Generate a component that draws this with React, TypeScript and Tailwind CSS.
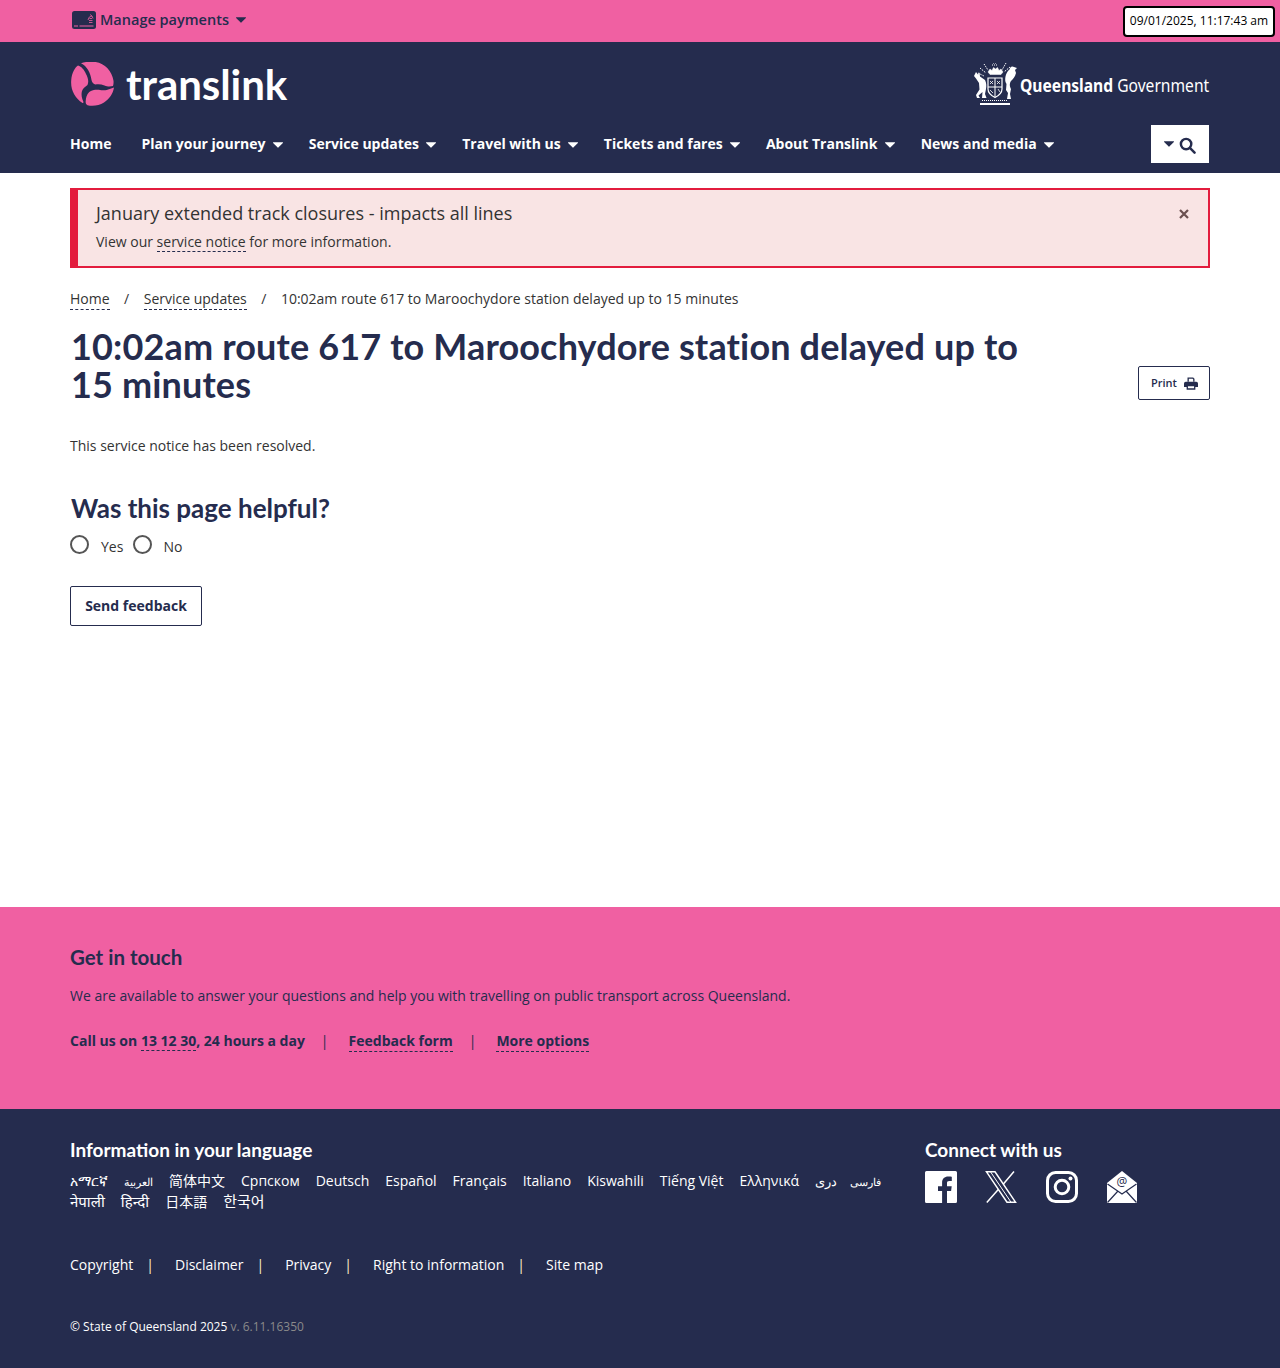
import React from "react";

const OS = "font-['Open_Sans',sans-serif]";
const H = "font-['Lato',sans-serif]";

function Caret({ className = "" }: { className?: string }) {
  return (
    <svg viewBox="0 0 10 6" className={`w-[10px] h-[6px] ${className}`} fill="currentColor">
      <path d="M0.4 0.3h9.2a.4.4 0 0 1 .3.7L5.3 5.6a.4.4 0 0 1-.6 0L.1 1a.4.4 0 0 1 .3-.7z" />
    </svg>
  );
}

function NavItem({ label, caret = true, className = "" }: { label: string; caret?: boolean; className?: string }) {
  return (
    <a className={`flex items-center gap-[7px] text-[14px] font-bold text-white leading-[20px] whitespace-nowrap ${className}`}>
      {label}
      {caret && <Caret className="text-white mt-[2px]" />}
    </a>
  );
}

function Crest() {
  return (
    <svg viewBox="0 0 44 42" className="w-[44px] h-[42px] shrink-0" fill="none" stroke="#fff">
      <path d="M15 9l2-3 2 1.500 1.500-3 2 1.500 2-1.500 1.500 3 2-1.500 2 3-2 2.500H17z" fill="#fff" strokeWidth="0.5" />
      <path d="M11 1l4 6M7 5l6 5M5 10l6 3M33 0l-4 7M37 4l-6 5" strokeWidth="1" strokeDasharray="1.500 1" />
      <path d="M19 2h6M20 0h4" strokeWidth="1" strokeDasharray="1 1" />
      <path d="M15 15h14v11c0 5-4 7-7 8.500-3-1.500-7-3.500-7-8.500z" strokeWidth="1.200" />
      <path d="M22 15v19M15 24h14" strokeWidth="1" />
      <path d="M17 18l3 3M20 18l-3 3M24 18l3 3M27 18l-3 3M17 27l3 3M25 26l2 3" strokeWidth="0.800" />
      <path d="M3 9l2 2.500 1.500-2 .5 4 5 3.500c1.500 3 1.500 6 1 9l-1 5 1.500 4H9l.5-6-4 3.500 1.500 2.500H4l-1-3 3.500-5.500L6 20l-3-4.500L1 13z" fill="#fff" stroke="none" />
      <path d="M44 5l-2 2 1 3c-1 4-3 6-5 8-2 3-1 6 0 8l-1 5 1 5h-4l1-6-2-3 .5-6-1-2c-1-5 1-10 4-12.500.5-1.500 1-3 3-3z" fill="#fff" stroke="none" />
      <path d="M7 40h30v2H7z" fill="#fff" stroke="none" />
      <path d="M9 37.500h26" strokeWidth="1" strokeDasharray="1 1" />
    </svg>
  );
}

function TLogo() {
  return (
    <svg viewBox="0 0 44 44" className="w-[44px] h-[44px]" fill="#f060a2">
      <path d="M10 1.300C14-.3 19-.5 23-.2c10 .8 18 8.500 19.500 19 .2 2 0 4-.5 5.200-2 .4-5 1-8.500-.5-3-1.200-6-1.500-9-1-2-.2-3.500-2-4-4.500C19.500 11 16 4 10 1.300z" />
      <path d="M7 3.500C4.500 5 .8 10 .2 18.500-.5 28 4 36 11.500 41c.8.300 1.200-.5.800-1.500-1.500-3-2.300-7-1.300-10.500 1-3 3.500-4.500 5.500-6 1.500-3.500.5-7.500-1.500-11C13.500 8 10.500 4.500 7 3.500z" />
      <path d="M43 25.500c-1 6-4.500 11.500-10 15-5 3-11 4-16.500 2.700-1.500-.5-2-2-1.800-4.200.2-3.500 1-6.500 3.500-9 2.500-2 6-2.500 9.500-2.300 3 .5 5.500 1 8 .2 2.500-.6 5-1.400 7.300-2.400z" />
    </svg>
  );
}

function Sep() {
  return <span className="pl-[13px] pr-[21px] text-[#fff3c4]">|</span>;
}

function DashedLink({ children, className = "" }: { children: React.ReactNode; className?: string }) {
  return <a className={`border-b border-dashed border-[#252c4e] ${className}`}>{children}</a>;
}

const langs: { t: string; c?: string }[] = [
  { t: "አማርኛ" },
  { t: "العربية", c: "text-[11px]" },
  { t: "简体中文" },
  { t: "Српском" },
  { t: "Deutsch" },
  { t: "Español" },
  { t: "Français" },
  { t: "Italiano" },
  { t: "Kiswahili" },
  { t: "Tiếng Việt" },
  { t: "Ελληνικά" },
  { t: "دری", c: "text-[13px]" },
  { t: "فارسی", c: "text-[11px] -ml-[3px]" },
  { t: "नेपाली", c: "text-[15px]" },
  { t: "हिन्दी", c: "text-[15px]" },
  { t: "日本語" },
  { t: "한국어", c: "text-[15px]" },
];

export default function App() {
  return (
    <div className={`${OS} w-[1280px] h-[1368px] flex flex-col bg-white text-[#333]`}>
      <div className="h-[42px] bg-[#f060a2] flex items-center justify-between pl-[72px] pr-[5px]">
        <div className="flex items-center gap-[4px] text-[#252c4e] -mt-[3px]">
          <svg viewBox="0 0 24 18" className="w-[24px] h-[18px]">
            <rect width="24" height="18" rx="2.500" fill="#252c4e" />
            <path d="M2 15h4M7.500 15h14" stroke="#f060a2" strokeWidth="1" />
            <path d="M17 11.500h3.500M17 9.500h3.500M17.500 7.500h2.500M16 9a4.500 4.500 0 0 1 4-4M18 3.500a5 5 0 0 1 3 4" stroke="#f060a2" strokeWidth="0.800" fill="none" />
          </svg>
          <span className="text-[14.500px] font-semibold leading-[20px]">Manage payments</span>
          <Caret className="ml-[3px] text-[#252c4e]" />
        </div>
        <div className="h-[31px] w-[152px] bg-white border-2 border-black rounded-[4px] flex items-center justify-center text-[12px] text-black whitespace-nowrap">
          09/01/2025, 11:17:43 am
        </div>
      </div>

      <header className="h-[131px] bg-[#252c4e] px-[70px] flex flex-col shrink-0">
        <div className="h-[83px] flex items-center justify-between">
          <div className="flex items-center gap-[11px] pl-[1px]">
            <TLogo />
            <span className="font-['Lato',sans-serif] font-bold text-[42px] leading-none text-white tracking-[-0.05px]">translink</span>
          </div>
          <div className="flex items-center mr-[1px]">
            <Crest />
            <span className="text-[18px] text-white font-bold whitespace-nowrap font-['Noto_Sans',sans-serif] leading-none mt-[2px] scale-x-[0.867] origin-right -ml-[26px]">
              Queensland <span className="font-normal">Government</span>
            </span>
          </div>
        </div>
        <div className="flex items-center justify-between">
          <nav className="flex items-center gap-[26.200px]">
            <NavItem label="Home" caret={false} className="mr-[3.800px]" />
            <NavItem label="Plan your journey" />
            <NavItem label="Service updates" />
            <NavItem label="Travel with us" />
            <NavItem label="Tickets and fares" />
            <NavItem label="About Translink" />
            <NavItem label="News and media" />
          </nav>
          <button className="w-[58px] h-[38px] mr-[1px] bg-white flex items-center justify-center gap-[5px] text-[#252c4e]">
            <Caret className="w-[9px] h-[5px]" />
            <svg viewBox="0 0 18 18" className="w-[17px] h-[17px] mt-[2px]" fill="none" stroke="#252c4e" strokeWidth="2.600">
              <circle cx="7.500" cy="7.500" r="5.500" />
              <path d="M11.500 11.500L16.500 16.500" strokeLinecap="round" />
            </svg>
          </button>
        </div>
      </header>

      <main className="flex-1 px-[70px] pt-[15px] relative">
        <div className="h-[80px] bg-[#f9e4e4] border-2 border-l-[8px] border-[#e31c3d] pl-[18px] pt-[11px] relative">
          <div className="text-[18px] leading-[24px] text-[#333]">January extended track closures - impacts all lines</div>
          <div className="text-[14px] leading-[20px] mt-[7px] text-[#333]">
            View our <DashedLink>service notice</DashedLink> for more information.
          </div>
          <svg viewBox="0 0 10 10" className="absolute right-[19px] top-[19px] w-[10px] h-[10px]" stroke="#6b5050" strokeWidth="2.200">
            <path d="M1 1l8 8M9 1l-8 8" />
          </svg>
        </div>

        <div className="flex items-baseline mt-[21px] text-[14px] leading-[20px] text-[#333]">
          <DashedLink>Home</DashedLink>
          <span className="px-[14.500px]">/</span>
          <DashedLink>Service updates</DashedLink>
          <span className="px-[14.500px]">/</span>
          <span>10:02am route 617 to Maroochydore station delayed up to 15 minutes</span>
        </div>

        <div className="flex items-end justify-between mt-[17px]">
          <h1 className={`${H} w-[980px] pl-[1px] text-[36px] leading-[38px] font-bold tracking-[0.15px] text-[#252c4e]`}>
            10:02am route 617 to Maroochydore station delayed up to 15 minutes
          </h1>
          <button className="w-[72px] h-[34px] mb-[3px] pl-[12px] border border-[#252c4e] rounded-[2px] flex items-center gap-[7px] text-[11px] font-semibold text-[#252c4e]">
            Print
            <svg viewBox="0 0 16 14" className="w-[14px] h-[13px]" fill="#252c4e">
              <path d="M4 0h6.500L12 1.500V5h-1.500V2.200L9.800 1.500H5.500V5H4z" />
              <path d="M2 5h12a2 2 0 0 1 2 2v4h-3v3H3v-3H0V7a2 2 0 0 1 2-2zm2.500 5v2.500h7V10z" />
            </svg>
          </button>
        </div>

        <p className="text-[14px] leading-[20px] mt-[33px] text-[#333]">This service notice has been resolved.</p>

        <h2 className={`${H} pl-[1px] text-[26px] leading-[30px] font-bold text-[#252c4e] mt-[37px]`}>Was this page helpful?</h2>

        <div className="flex items-center mt-[13px] text-[14px] text-[#333]">
          <span className="w-[19px] h-[19px] rounded-full border-2 border-[#555] bg-white -mt-[4px]" />
          <span className="ml-[12px] mr-[10px]">Yes</span>
          <span className="w-[19px] h-[19px] rounded-full border-2 border-[#555] bg-white -mt-[4px]" />
          <span className="ml-[11px]">No</span>
        </div>

        <button className="mt-[29px] w-[132px] h-[40px] pb-[2px] border border-[#252c4e] rounded-[2px] text-[14px] font-bold text-[#252c4e] bg-white">
          Send feedback
        </button>
      </main>

      <section className="h-[202px] bg-[#f060a2] px-[70px] pt-[38px] text-[#252c4e] shrink-0">
        <h2 className={`${H} text-[20.500px] leading-[24px] font-bold`}>Get in touch</h2>
        <p className="text-[14px] leading-[20px] mt-[17px]">We are available to answer your questions and help you with travelling on public transport across Queensland.</p>
        <div className="flex items-baseline mt-[25px] text-[14px] leading-[20px] font-bold">
          <span>
            Call us on <DashedLink>13 12 30</DashedLink>, 24 hours a day
          </span>
          <span className="pl-[16px] pr-[20px] font-normal">|</span>
          <DashedLink>Feedback form</DashedLink>
          <span className="pl-[16px] pr-[20px] font-normal">|</span>
          <DashedLink>More options</DashedLink>
        </div>
      </section>

      <footer className="h-[259px] bg-[#252c4e] px-[70px] pt-[29px] text-white shrink-0">
        <div className="flex">
          <div className="w-[855px]">
            <h2 className={`${H} text-[19px] leading-[24px] font-bold`}>Information in your language</h2>
            <div className="flex flex-wrap items-baseline gap-x-[16px] mt-[9px] text-[14px] leading-[19.500px] w-[830px] font-['Open_Sans','Noto_Sans','Noto_Sans_CJK_JP',sans-serif]">
              {langs.map((l) => (
                <a key={l.t} className={`whitespace-nowrap ${l.c ?? ""}`}>{l.t}</a>
              ))}
            </div>
          </div>
          <div>
            <h2 className={`${H} text-[19px] leading-[24px] font-bold`}>Connect with us</h2>
            <div className="flex items-center mt-[9px]">
              <svg viewBox="0 0 32 32" className="w-[32px] h-[32px]" fill="#fff">
                <path d="M1.500 0h29A1.500 1.500 0 0 1 32 1.500v29a1.500 1.500 0 0 1-1.500 1.500H22V20h4.100l.6-4.700H22v-3c0-1.400.4-2.300 2.300-2.300h2.500V5.800c-.4-.1-1.900-.2-3.600-.2-3.600 0-6.100 2.200-6.100 6.300v3.400h-4.100V20h4.100v12H1.500A1.500 1.500 0 0 1 0 30.500v-29A1.500 1.500 0 0 1 1.500 0z" />
              </svg>
              <svg viewBox="0 0 32 32" className="w-[32px] h-[32px] ml-[28px]" fill="none" stroke="#fff" strokeWidth="1.500">
                <path d="M1.500 .8h8.500L30.500 31.200h-8.500z" />
                <path d="M5.500 .8L26 31.200" strokeWidth="1" />
                <path d="M29 .5L18.200 13.200M13.500 18.200L1.800 31.500" />
              </svg>
              <svg viewBox="0 0 32 32" className="w-[32px] h-[32px] ml-[29px]" fill="none" stroke="#fff" strokeWidth="3">
                <rect x="1.500" y="1.500" width="29" height="29" rx="8" />
                <circle cx="16" cy="16" r="6.800" />
                <circle cx="24.500" cy="7.500" r="2" fill="#fff" stroke="none" />
              </svg>
              <svg viewBox="0 0 30 32" className="w-[30px] h-[32px] ml-[29px]">
                <path d="M15 0l15 12v20H0V12z" fill="#fff" />
                <path d="M.5 13l14.500 10 14.500-10M.5 31.500l10.500-11.500M29.500 31.500l-10.500-11.500" fill="none" stroke="#252c4e" strokeWidth="1.200" />
                <text x="15" y="15" textAnchor="middle" fontSize="12" fill="#252c4e" fontFamily="'Open Sans',sans-serif">@</text>
              </svg>
            </div>
          </div>
        </div>

        <div className="flex items-center mt-[44px] text-[14px] leading-[20px]">
          <a>Copyright</a>
          <Sep />
          <a>Disclaimer</a>
          <Sep />
          <a>Privacy</a>
          <Sep />
          <a>Right to information</a>
          <Sep />
          <a>Site map</a>
        </div>

        <div className="mt-[42px] text-[12px] leading-[20px]">
          © State of Queensland 2025 <span className="text-[#8a8a8a]">v. 6.11.16350</span>
        </div>
      </footer>
    </div>
  );
}
